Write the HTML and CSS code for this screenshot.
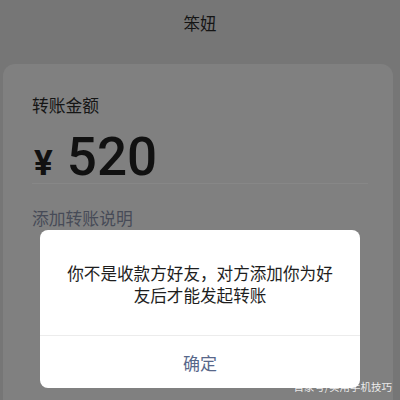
FILE: index.html
```html
<!DOCTYPE html>
<html lang="zh-CN">
<head>
<meta charset="utf-8">
<link rel="stylesheet" href="styles.css">
</head>
<body>
<div class="screen">
  <div class="header"><span class="title">笨妞</span></div>
  <div class="card">
    <div class="label">转账金额</div>
    <div class="amount"><span class="yen">¥</span><span class="num">520</span></div>
    <div class="note">添加转账说明</div>
  </div>
  <div class="dialog">
    <div class="msg">你不是收款方好友，对方添加你为好友后才能发起转账</div>
    <div class="btn">确定</div>
  </div>
  <div class="watermark">百家号/实用手机技巧</div>
</div>
</body>
</html>
```
FILE: styles.css
```css
html, body {
  margin: 0;
  padding: 0;
  background: #767676;
}
.screen {
  position: relative;
  width: 400px;
  height: 400px;
  overflow: hidden;
  font-family: "Noto Sans CJK SC", "Noto Sans", sans-serif;
  background: #767676;
}
.header {
  height: 64px;
  box-sizing: border-box;
  padding-top: 12px;
  display: flex;
  justify-content: center;
}
.title {
  font-size: 16.5px;
  line-height: 22px;
  color: #151515;
}
.card {
  margin: 0 7px 0 3px;
  height: 336px;
  box-sizing: border-box;
  padding: 29px 25px 0 29px;
  background: #808080;
  border-radius: 12px 12px 0 0;
}
.label {
  font-size: 16.8px;
  line-height: 24px;
  color: #151515;
}
.amount {
  margin-top: 14px;
  height: 52px;
  display: flex;
  align-items: baseline;
  border-bottom: 1px solid #878787;
  color: #111;
  font-family: Roboto, "Liberation Sans", sans-serif;
  line-height: 52px;
}
.yen {
  font-size: 35px;
  font-weight: 700;
  margin-left: 2px;
  margin-right: 14px;
}
.num {
  font-size: 53px;
  font-weight: 500;
}
.note {
  margin-top: 22px;
  font-size: 16.8px;
  line-height: 24px;
  color: #474b57;
}
.dialog {
  position: absolute;
  left: 40px;
  top: 230px;
  width: 320px;
  height: 158px;
  background: #fff;
  border-radius: 8px;
  display: flex;
  flex-direction: column;
}
.msg {
  padding: 32px 24px 29px;
  font-size: 16.6px;
  line-height: 22px;
  text-align: center;
  color: #1e1e1e;
  border-bottom: 1px solid #ececec;
}
.btn {
  flex: 1;
  display: flex;
  align-items: center;
  justify-content: center;
  font-size: 17px;
  color: #58678a;
}
.watermark {
  position: absolute;
  right: 8px;
  bottom: 5px;
  font-size: 10.5px;
  line-height: 16px;
  color: rgba(255, 255, 255, 0.85);
}
```
